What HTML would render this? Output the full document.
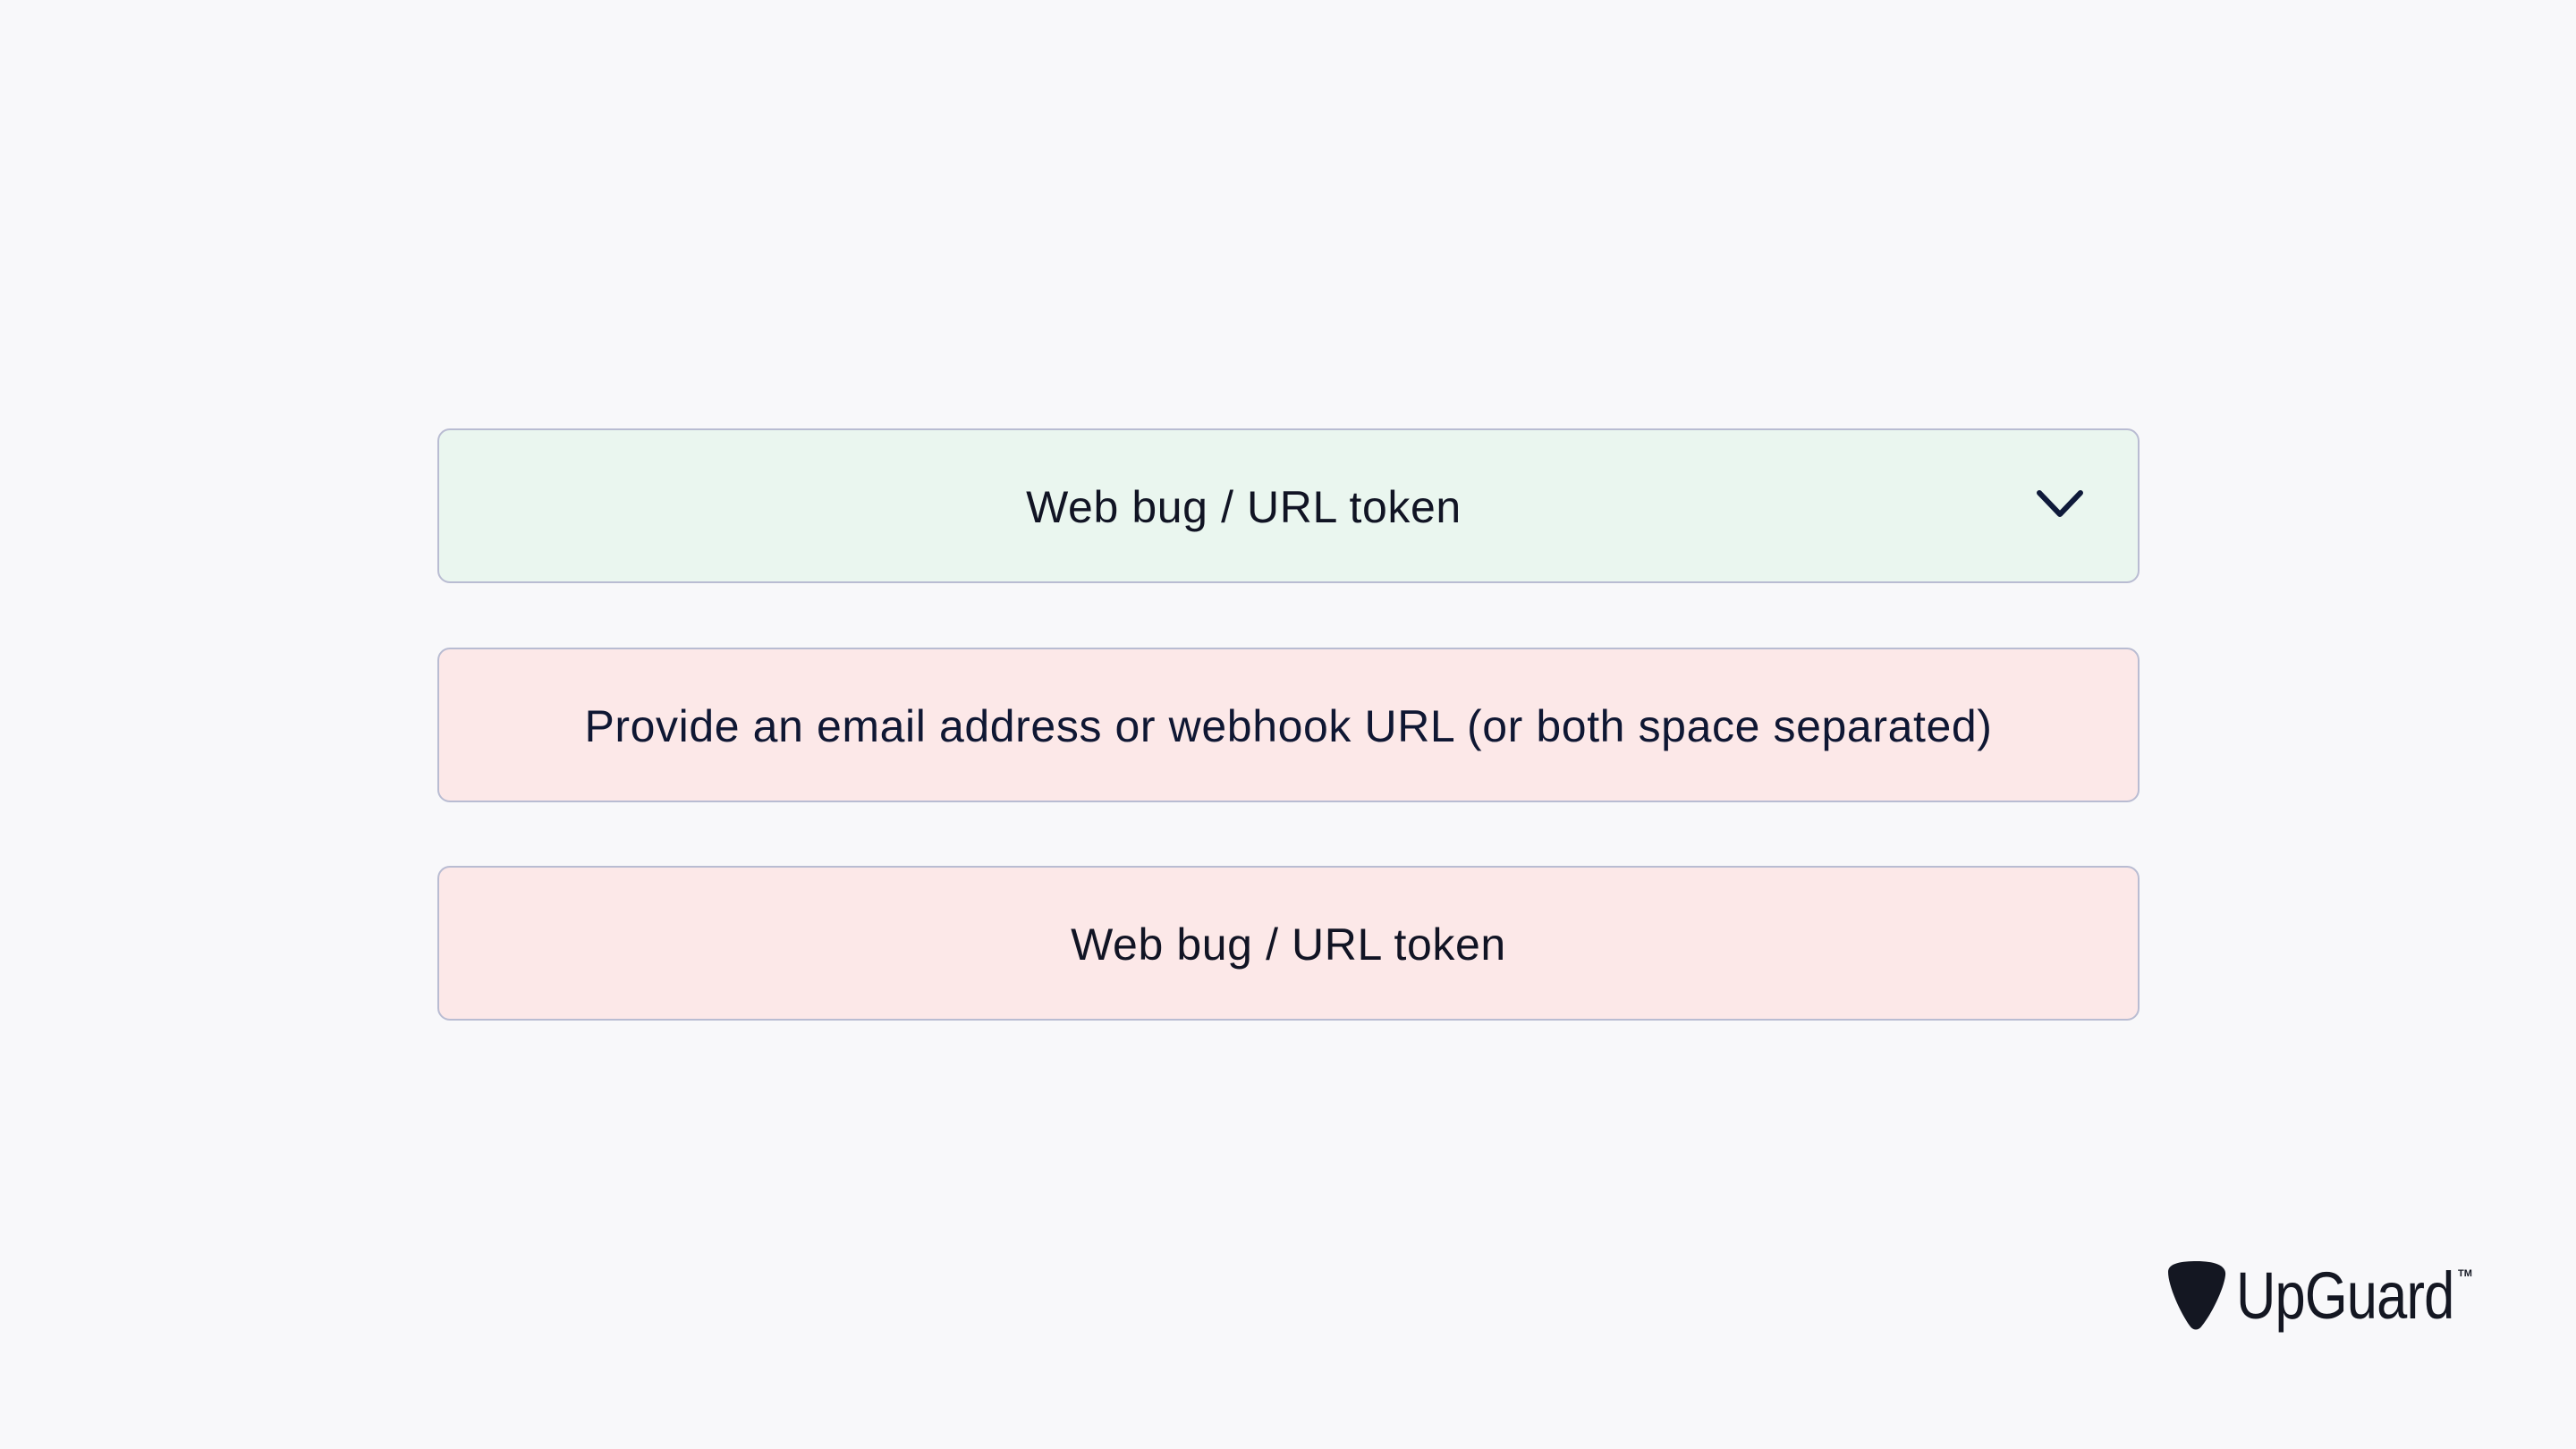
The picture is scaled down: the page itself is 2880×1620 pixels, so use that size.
<!DOCTYPE html>
<html><head><style>
html,body{margin:0;padding:0;width:2880px;height:1620px;background:#f8f8fa;overflow:hidden;font-family:"Liberation Sans",sans-serif}
.box{position:absolute;left:489px;width:1899px;height:167px;border:2px solid #b9bcd2;border-radius:14px;display:flex;align-items:center;justify-content:center;font-size:50px;letter-spacing:0.6px;color:#0f1733;padding-top:2px;box-sizing:content-box}
.g{background:#eaf6ef}
.r{background:#fce8e8}
</style></head><body>
<div class="box g" style="top:479px"><span style="position:relative;left:-50px;color:#111424">Web bug / URL token</span>
<svg style="position:absolute;left:1786px;top:66px" width="52" height="36" viewBox="0 0 52 36"><path d="M3 4 L26 28 L49 4" fill="none" stroke="#0f1a3a" stroke-width="6" stroke-linecap="round" stroke-linejoin="round"/></svg>
</div>
<div class="box r" style="top:724px">Provide an email address or webhook URL (or both space separated)</div>
<div class="box r" style="top:968px"><span style="color:#111424">Web bug / URL token</span></div>
<svg style="position:absolute;left:2420px;top:1408px" width="72" height="80" viewBox="0 0 72 80"><path d="M4 14 C4 4 20 2 36 2 C54 2 70 6 68 18 C66 34 52 62 42 74 C38 80 32 80 28 74 C18 60 4 30 4 14 Z" fill="#141722"/></svg>
<div style="position:absolute;left:2500px;top:1406px;font-size:74px;color:#141722;letter-spacing:-1px;transform:scaleX(0.83);transform-origin:left">UpGuard</div>
<div style="position:absolute;left:2748px;top:1418px;font-size:11px;color:#141722;font-weight:bold">TM</div>
</body></html>
